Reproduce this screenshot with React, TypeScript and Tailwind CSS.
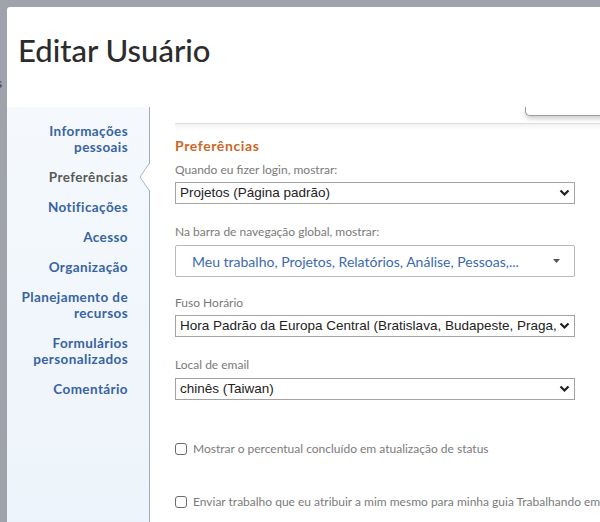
import React from "react";

const navItems = [
  { label: ["Informações", "pessoais"] },
  { label: ["Preferências"], active: true },
  { label: ["Notificações"] },
  { label: ["Acesso"] },
  { label: ["Organização"] },
  { label: ["Planejamento de", "recursos"] },
  { label: ["Formulários", "personalizados"] },
  { label: ["Comentário"] },
];

const Chevron = () => (
  <svg width="11" height="8" viewBox="0 0 11 8" className="shrink-0">
    <polyline points="1.5,1.5 5.5,5.5 9.5,1.5" fill="none" stroke="#1f1f1f" strokeWidth="2.2" />
  </svg>
);

const SelectBox = ({ value }: { value: string }) => (
  <div className="flex h-[22px] w-[400px] items-center gap-[3px] border border-[#a3a3a3] bg-white pl-[4px] pr-[4px]">
    <span className="flex-1 overflow-hidden whitespace-nowrap font-['Liberation_Sans',Arial,sans-serif] text-[13.5px] text-[#222]">
      {value}
    </span>
    <Chevron />
  </div>
);

const Label = ({ children, className = "" }: { children: React.ReactNode; className?: string }) => (
  <div className={`text-[12px] leading-[16px] text-[#7a7a7a] ${className}`}>{children}</div>
);

const Checkbox = ({ label, className = "" }: { label: string; className?: string }) => (
  <label className={`flex items-center gap-[6px] whitespace-nowrap ${className}`}>
    <span className="h-[12px] w-[12px] shrink-0 rounded-[3px] border border-[#6b6b6b] bg-white" />
    <span className="text-[12px] leading-[16px] text-[#7b7b7b]">{label}</span>
  </label>
);

export default function App() {
  return (
    <div className="relative h-[522px] w-[600px] overflow-hidden bg-[#a0a3ab] font-['Lato','Open_Sans',sans-serif]">
      {/* page behind the overlay */}
      <span className="absolute left-[-4px] top-[72px] text-[14px] font-bold text-[#55575c]">s</span>

      <div className="absolute left-[7px] top-[7px] flex h-[540px] w-[640px] flex-col rounded-tl-[3px] bg-white">
        {/* Header */}
        <div className="h-[100px] shrink-0 pl-[11px] pt-[24px]">
          <h1 className="text-[31px] font-medium leading-[38px] text-[#2c2c2c]">Editar Usuário</h1>
        </div>

        <div className="flex flex-1">
          {/* Sidebar */}
          <nav className="w-[143px] shrink-0 border-r border-[#9eacbd] bg-linear-to-b from-[#f5f9fd] to-[#ecf3fa] pr-[21px] pt-[16px]">
            <ul className="flex flex-col gap-[14px]">
              {navItems.map((item) => (
                <li
                  key={item.label[0]}
                  className={`relative text-right text-[13.5px] font-bold leading-[16px] tracking-[0.4px] ${
                    item.active ? "text-[#585858]" : "text-[#3763a3]"
                  }`}
                >
                  {item.label.map((l) => (
                    <div key={l}>{l}</div>
                  ))}
                  {item.active && (
                    <svg
                      width="11"
                      height="28"
                      viewBox="0 0 11 28"
                      className="absolute right-[-22px] top-[-6px]"
                    >
                      <polygon points="11,0 1,14 11,28" fill="#fff" />
                      <polyline points="10.5,0 1,14 10.5,28" fill="none" stroke="#a9b5c3" strokeWidth="1" />
                    </svg>
                  )}
                </li>
              ))}
            </ul>
          </nav>

          {/* Content */}
          <div className="flex-1 pl-[25px]">
            <div className="h-[17px] border-b border-[#dcdcdc]">
              <div className="ml-[350px] h-[9px] rounded-bl-[5px] border-b border-l border-[#9a9a9a] bg-white shadow-[0_3px_4px_rgba(0,0,0,0.18)]" />
            </div>
            <div className="h-[6px] bg-linear-to-b from-[#f3f3f3] to-white" />

            <h2 className="mt-[8px] text-[14px] font-bold leading-[16px] tracking-[0.6px] text-[#cc6627]">
              Preferências
            </h2>

            <Label className="mt-[8px]">Quando eu fizer login, mostrar:</Label>
            <div className="mt-[4px]">
              <SelectBox value="Projetos (Página padrão)" />
            </div>

            <Label className="mt-[20px]">Na barra de navegação global, mostrar:</Label>
            <div className="mt-[5px] flex h-[32px] w-[400px] items-center justify-between rounded-[2px] border border-[#b9b9b9] bg-white pl-[16px] pr-[14px]">
              <span className="whitespace-nowrap text-[14px] text-[#3b69b0]">
                Meu trabalho, Projetos, Relatórios, Análise, Pessoas,...
              </span>
              <svg width="7" height="4" viewBox="0 0 7 4">
                <polygon points="0,0 7,0 3.5,4" fill="#555" />
              </svg>
            </div>

            <Label className="mt-[18px]">Fuso Horário</Label>
            <div className="mt-[4px]">
              <SelectBox value="Hora Padrão da Europa Central (Bratislava, Budapeste, Praga, Liubliana)" />
            </div>

            <Label className="mt-[20px]">Local de email</Label>
            <div className="mt-[5px]">
              <SelectBox value="chinês (Taiwan)" />
            </div>

            <Checkbox className="mt-[41px]" label="Mostrar o percentual concluído em atualização de status" />
            <Checkbox
              className="mt-[37px]"
              label="Enviar trabalho que eu atribuir a mim mesmo para minha guia Trabalhando em"
            />
          </div>
        </div>
      </div>
    </div>
  );
}
